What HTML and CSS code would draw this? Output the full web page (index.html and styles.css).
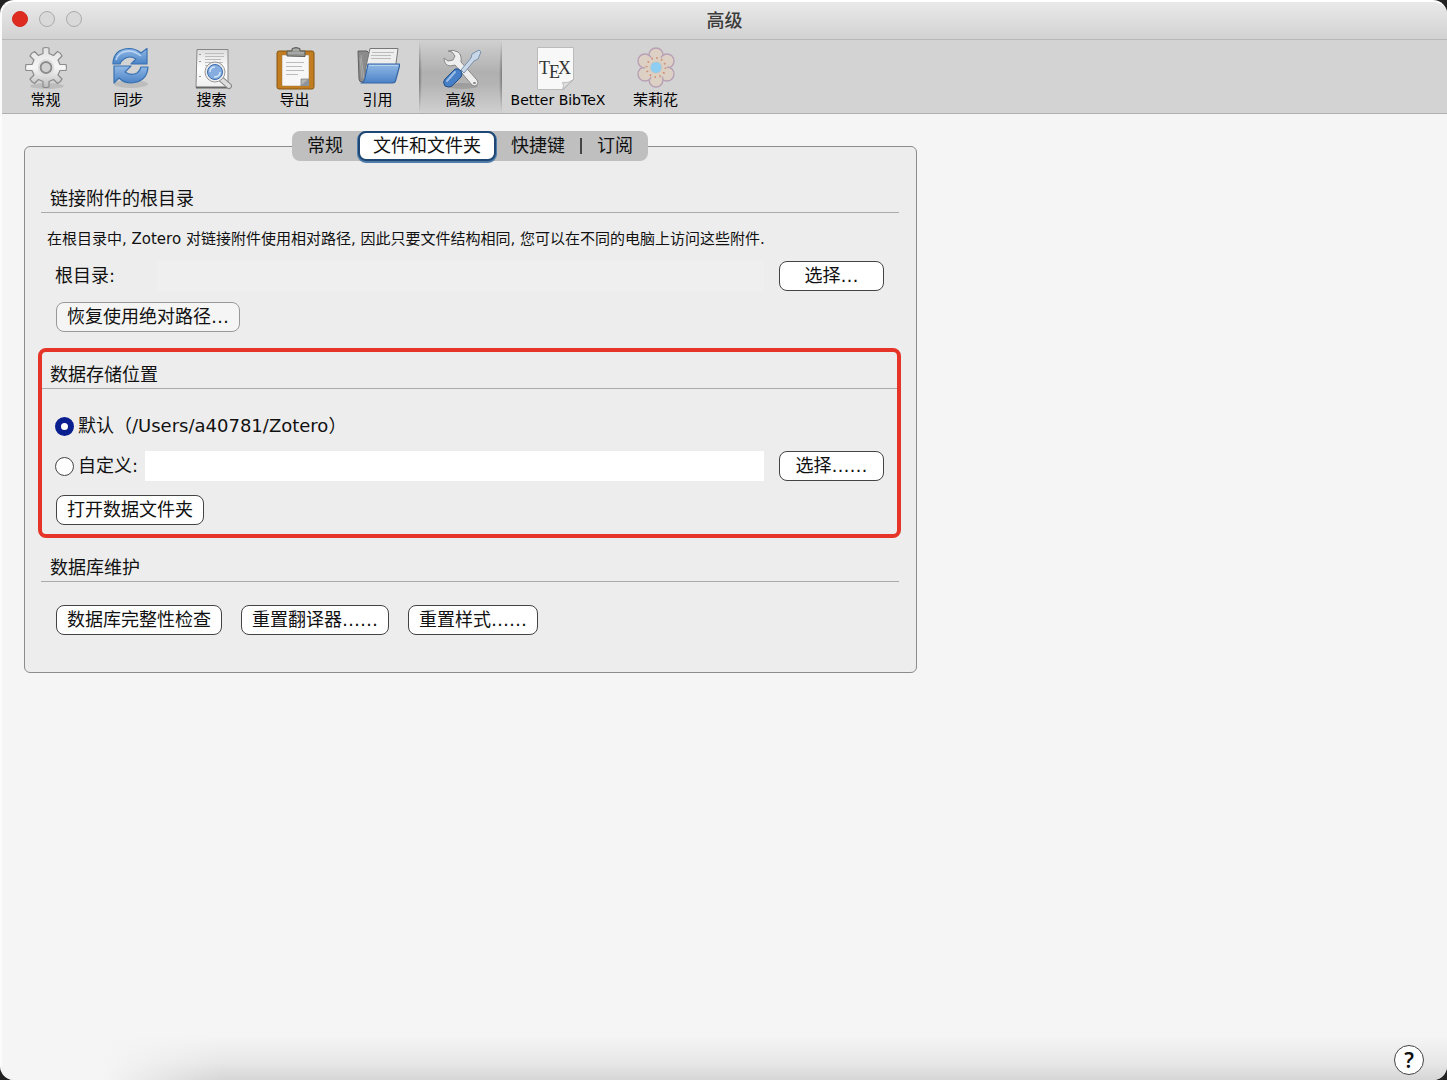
FILE: index.html
```html
<!DOCTYPE html>
<html lang="zh-CN">
<head>
<meta charset="utf-8">
<title>高级</title>
<link rel="stylesheet" href="styles.css">
</head>
<body>
<div class="window">
  <header class="titlebar">
    <div class="lights">
      <button class="light light-close" type="button" aria-label="关闭"></button>
      <button class="light" type="button" aria-label="最小化"></button>
      <button class="light" type="button" aria-label="缩放"></button>
    </div>
    <h1 class="title">高级</h1>
  </header>

  <nav class="toolbar">
    <button class="tool" type="button">
      <svg class="icon" viewBox="0 0 44 44">
        <defs>
          <linearGradient id="gear" x1="0" y1="0" x2="0" y2="1"><stop offset="0" stop-color="#e2e2e2"/><stop offset=".5" stop-color="#f6f6f6"/><stop offset="1" stop-color="#bcbcbc"/></linearGradient>
          <linearGradient id="blue" x1="0" y1="0" x2="0" y2="1"><stop offset="0" stop-color="#92b9e6"/><stop offset="1" stop-color="#4b83c6"/></linearGradient>
          <linearGradient id="paper" x1="0" y1="0" x2="0" y2="1"><stop offset="0" stop-color="#dedede"/><stop offset=".5" stop-color="#fff"/><stop offset="1" stop-color="#eee"/></linearGradient>
        </defs>
        <ellipse cx="23" cy="40" rx="17" ry="3" fill="#000" opacity=".1"/>
        <path d="M19 7.500V2q3-1 6 0v5.500l4.500 2 4-4q3 1 4.500 4.500l-4 4 2 4.500H42q1 3 0 6h-6l-2 4.500 4 4q-1 3-4.500 4.500l-4-4-4.500 2v5.500q-3 1-6 0V35.500l-4.500-2-4 4q-3-1-4.500-4.500l4-4-2-4.500H2q-1-3 0-6h6l2-4.500-4-4q1-3 4.500-4.500l4 4z" fill="url(#gear)" stroke="#8b8b8b" stroke-width="1.200" stroke-linejoin="round"/>
        <circle cx="22" cy="21.500" r="5.500" fill="#d0d0d0" stroke="#8b8b8b" stroke-width="2"/>
        <circle cx="22" cy="21.500" r="7.500" fill="none" stroke="#ddd" stroke-width="1.500"/>
      </svg>
      <span>常规</span>
    </button>
    <button class="tool" type="button">
      <svg class="icon" viewBox="0 0 44 44">
        <ellipse cx="24" cy="38" rx="17" ry="4" fill="#000" opacity=".1"/>
        <path d="M6 17Q7 3 22 2.500q7 0 12 4.500l6-4.500V18H24l5-5q-6-4-12 0-3 2-4 5H6z" fill="url(#blue)" stroke="#3972b3" stroke-width="1.200" stroke-linejoin="round"/>
        <path d="M41 21q-1 15-17 16-7 0-12-5l-5 5V20h17l-6 6q6 4 12 1 3-2 4-6z" fill="url(#blue)" stroke="#3972b3" stroke-width="1.200" stroke-linejoin="round"/>
        <path d="M9 14q2-8 12-9 7 0 13 5" fill="none" stroke="#bdd6f3" stroke-width="1.500"/>
      </svg>
      <span>同步</span>
    </button>
    <button class="tool" type="button">
      <svg class="icon" viewBox="0 0 44 44">
        <path d="M7 3.500h31v38H6z" fill="url(#paper)" stroke="#888"/>
        <path d="M6 41.500h32" stroke="#666" stroke-width="2"/>
        <path d="M15 7.500h19M15 10.500h19M15 13.500h16M15 16.500h18M15 19.500h6" stroke="#bbb" stroke-width="1"/>
        <path d="M10 8v1M10 15v1M10 30v1" stroke="#999" stroke-width="2"/>
        <path d="m31 33 8 7" stroke="#888" stroke-width="6" stroke-linecap="round"/><path d="m31 33 8 7" stroke="#ddd" stroke-width="4" stroke-linecap="round"/>
        <circle cx="25" cy="26" r="10" fill="#eee" stroke="#999"/><circle cx="25" cy="26" r="7.500" fill="#86ade0" stroke="#386bad"/>
        <path d="M20 26q0-5 5-5M24 31q6 0 6-5" fill="none" stroke="#cfe3fa" stroke-width="1.500"/>
      </svg>
      <span>搜索</span>
    </button>
    <button class="tool" type="button">
      <svg class="icon" viewBox="0 0 44 44">
        <rect x="4" y="5" width="37" height="38" rx="2" fill="#c17d20" stroke="#865713"/>
        <path d="M9 9h27v24l-6 7H9z" fill="#f7f7f7" stroke="#a17a45" stroke-width=".5"/><path d="M28 40v-7h8z" fill="#b5b5b5" stroke="#777" stroke-width=".7"/><path d="M28 40h8v-7z" fill="#8e949e"/>
        <path d="M13 16.500h18M13 20.500h16M13 24.500h18M13 28.500h12" stroke="#bbb"/>
        <path d="M14 10V5h5V2.500q4-2 8 0V5h5v5.500z" fill="#949692" stroke="#5c5e5a" stroke-linejoin="round"/><path d="M15 7h16M20 4h6" stroke="#bbb"/>
      </svg>
      <span>导出</span>
    </button>
    <button class="tool" type="button">
      <svg class="icon" viewBox="0 0 44 44">
        <path d="M2 5h9l3 3v28H6q-3 0-3-3z" fill="#8b8b8b" stroke="#606060"/>
        <path d="M5 9l3 24M4 12l2 20" stroke="#aaa"/>
        <path d="M14 2.500h28L39 25H9z" fill="#eee" stroke="#777"/><path d="M16 6.500h22M15 9.500h20M15 12.500h20" stroke="#bbb"/>
        <path d="M12 18h31q1 0 .5 2l-4 15q-.5 2-3 2H5q3 0 4-5z" fill="url(#blue)" stroke="#3465a4" stroke-width="1.200" stroke-linejoin="round"/><path d="M13 19.500h29" stroke="#b7d1ef"/>
      </svg>
      <span>引用</span>
    </button>
    <button class="tool tool-selected" type="button" aria-current="page">
      <svg class="icon" viewBox="0 0 44 44">
        <ellipse cx="23" cy="40" rx="16" ry="3" fill="#000" opacity=".13"/>
        <path d="M9 5l4 1 3 4-2 4-5 1-4-3q0 7 6 8l5-1 17 20q3 2 5 0t0-5L22 16q1-7-3-10-5-3-10-1z" fill="#eee" stroke="#888" stroke-linejoin="round"/>
        <path d="M35 37l1 0" stroke="#888" stroke-width="2" stroke-linecap="round"/>
        <path d="m22 24 10-12 1-4 7-4 2 2-3 7-4 2-10 12z" fill="#c8d8e8" stroke="#7a91ab" stroke-linejoin="round"/>
        <path d="M16 23q4-1 6 2t0 6l-9 9q-3 2-7 0-3-4 0-7z" fill="#467fc5" stroke="#244f87"/><path d="m16 26-8 9" stroke="#9bbde6" stroke-width="2" stroke-linecap="round"/>
      </svg>
      <span>高级</span>
    </button>
    <button class="tool tool-wide" type="button">
      <svg class="icon" viewBox="0 0 44 44">
        <path d="M1.500 1.500h36v32l-10 10h-26z" fill="#f8f8f8" stroke="#bbb"/><path d="M26.500 43.500q2-4 0-7 6 1 11-3z" fill="#ddd" stroke="#aaa" stroke-width=".7"/>
        <text class="tex" x="3" y="28">T</text><text class="tex" x="13" y="32">E</text><text class="tex" x="22" y="28">X</text>
      </svg>
      <span>Better BibTeX</span>
    </button>
    <button class="tool" type="button">
      <svg class="icon" viewBox="0 0 44 44">
        <g fill="#ddd0c4" stroke="#b7a0b5" stroke-width="1.400">
          <circle cx="22" cy="9" r="7"/><circle cx="33" cy="15" r="7"/><circle cx="33" cy="28" r="7"/><circle cx="22" cy="34" r="7"/><circle cx="11" cy="28" r="7"/><circle cx="11" cy="15" r="7"/>
        </g>
        <circle cx="22" cy="21.500" r="11" fill="#ddd0c4"/>
        <circle cx="22" cy="21.500" r="9.500" fill="none" stroke="#cf9078" stroke-width="2" stroke-dasharray="1.500 3.474"/>
        <circle cx="22" cy="21.500" r="6" fill="#8fcdf2" stroke="#e0c8b0"/>
      </svg>
      <span>茉莉花</span>
    </button>
  </nav>

  <main class="content">
    <section class="group">
      <div class="tabs" role="tablist">
        <button class="tab" type="button" role="tab">常规</button>
        <button class="tab tab-selected" type="button" role="tab" aria-selected="true">文件和文件夹</button>
        <button class="tab" type="button" role="tab">快捷键</button>
        <span class="tab-divider"></span>
        <button class="tab" type="button" role="tab">订阅</button>
      </div>

      <section class="block block-base">
        <h2 class="caption">链接附件的根目录</h2>
        <p class="note">在根目录中, Zotero 对链接附件使用相对路径, 因此只要文件结构相同, 您可以在不同的电脑上访问这些附件.</p>
        <div class="row row-base">
          <label class="base-label" for="base-dir">根目录:</label>
          <input class="field field-disabled" id="base-dir" type="text" disabled>
          <button class="btn btn-choose" type="button">选择…</button>
        </div>
        <div class="row row-restore"><button class="btn btn-muted" type="button">恢复使用绝对路径…</button></div>
      </section>

      <section class="block block-data">
        <h2 class="caption">数据存储位置</h2>
        <div class="row row-default">
          <input class="radio" type="radio" name="location" id="loc-default" checked>
          <label for="loc-default">默认（/Users/a40781/Zotero）</label>
        </div>
        <div class="row row-custom">
          <input class="radio" type="radio" name="location" id="loc-custom">
          <label class="custom-label" for="loc-custom">自定义:</label>
          <input class="field" type="text" aria-label="自定义路径">
          <button class="btn btn-choose" type="button">选择……</button>
        </div>
        <div class="row row-open"><button class="btn" type="button">打开数据文件夹</button></div>
      </section>

      <section class="block block-maintenance">
        <h2 class="caption">数据库维护</h2>
        <div class="row row-actions">
          <button class="btn" type="button">数据库完整性检查</button>
          <button class="btn" type="button">重置翻译器……</button>
          <button class="btn" type="button">重置样式……</button>
        </div>
      </section>
    </section>
  </main>

  <footer class="footer">
    <button class="help" type="button" aria-label="帮助">?</button>
  </footer>
</div>
</body>
</html>
```
FILE: styles.css
```css
* {
  box-sizing: border-box;
}

body {
  margin: 0;
  background: #222;
  color: #111;
  font: 18px/26px "DejaVu Sans", "Noto Sans CJK SC", sans-serif;
}

button,
input {
  margin: 0;
  padding: 0;
  color: inherit;
  font: inherit;
}

h1,
h2,
p {
  margin: 0;
  font-size: inherit;
  font-weight: 400;
}

.window {
  display: flex;
  flex-direction: column;
  min-height: 100vh;
  overflow: hidden;
  background: #f5f5f5;
  border-top: 2px solid #fff;
  border-left: 2px solid #fbfbfb;
  border-radius: 14px;
}

.titlebar {
  display: grid;
  grid-template-columns: 1fr auto 1fr;
  align-items: center;
  height: 38px;
  padding: 0 10px 4px;
  background: linear-gradient(#e9e9e9, #d2d2d2);
  border-bottom: 1px solid #b8b8b8;
}

.lights {
  display: flex;
  gap: 11px;
}

.light {
  width: 16px;
  height: 16px;
  background: #d9d9d9;
  border: 1px solid #aaa;
  border-radius: 50%;
}

.light-close {
  background: #df2c20;
  border-color: #d2281d;
}

.title {
  color: #3c3c3c;
  font-family: "Noto Sans CJK SC", sans-serif;
  font-weight: 500;
}

.toolbar {
  display: flex;
  height: 74px;
  padding-left: 2px;
  background: #d3d3d3;
  border-bottom: 1px solid #b0b0b0;
}

.tool {
  display: flex;
  flex-direction: column;
  align-items: center;
  width: 83px;
  padding-top: 6px;
  background: none;
  border: 0;
  color: #000;
  font-size: 15px;
  line-height: 20px;
}

.tool-wide {
  width: 112px;
  font-size: 14px;
}

.tool-selected {
  background:
    radial-gradient(ellipse 3px 36px at left, #777, transparent),
    radial-gradient(ellipse 3px 36px at right, #777, transparent),
    linear-gradient(#d0d0d0, #b0b0b0 45%, #b4b4b4 60%, #d0d0d0);
}

.icon {
  width: 44px;
  height: 44px;
}

.tex {
  fill: #333;
  font: 18px "Liberation Serif", serif;
}

.content {
  padding: 32px 22px;
}

.group {
  max-width: 893px;
  padding: 0 17px 37px 16px;
  background: #ededed;
  border: 1px solid #8c8c8c;
  border-radius: 6px;
}

.tabs {
  display: flex;
  align-items: center;
  width: fit-content;
  height: 30px;
  margin: -16px auto 0;
  background: #bfbfbf;
  border-radius: 8px;
}

.tab {
  height: 30px;
  padding: 0 15px;
  background: none;
  border: 0;
}

.tab-selected {
  padding: 0 13px;
  background: #fff;
  border: 2px solid #1f4774;
  border-radius: 8px;
  box-shadow: 0 1px 0 1px #4f7cab;
  line-height: 24px;
}

.tab-divider {
  width: 2px;
  height: 16px;
  background: #444;
}

.caption {
  height: 26px;
  padding-left: 9px;
  border-bottom: 1px solid #aaa;
  line-height: 24px;
}

.row {
  display: flex;
  align-items: center;
  min-height: 30px;
  padding: 0 15px 0 14px;
}

.block-base {
  margin-top: 26px;
}

.note {
  margin-top: 16px;
  padding-left: 6px;
  font-size: 15px;
  line-height: 20px;
}

.row-base {
  margin-top: 12px;
}

.base-label {
  width: 102px;
}

.row-restore {
  margin-top: 11px;
  padding-left: 15px;
}

.field {
  flex: 1;
  min-width: 0;
  height: 30px;
  margin-right: 15px;
  background: #fff;
  border: 0;
}

.field-disabled {
  background: #efefef;
}

.btn {
  height: 30px;
  padding: 0 10px;
  background: #fff;
  border: 1px solid #444;
  border-radius: 8px;
  white-space: nowrap;
}

.btn-choose {
  width: 105px;
}

.btn-muted {
  background: #f5f5f5;
  border-color: #999;
}

.block-data {
  margin: 16px -2px 0 -3px;
  padding: 11px 0 9px;
  border: 4px solid #e63528;
  border-radius: 8px;
}

.block-data .caption {
  padding-left: 8px;
}

.row-default,
.row-custom {
  padding: 0 13px;
}

.row-default {
  margin-top: 22px;
}

.row-custom {
  margin-top: 10px;
}

.row-open {
  margin-top: 14px;
}

.radio {
  flex: none;
  width: 19px;
  height: 19px;
  margin-right: 4px;
  appearance: none;
  background: #fff;
  border: 1px solid #444;
  border-radius: 50%;
}

.radio:checked {
  border: 6px solid #0a1f8f;
}

.custom-label {
  width: 67px;
}

.block-maintenance {
  margin-top: 18px;
}

.row-actions {
  gap: 19px;
  margin-top: 23px;
  padding-left: 15px;
}

.footer {
  display: flex;
  justify-content: flex-end;
  margin-top: auto;
  padding: 10px 23px 5px;
  background:
    linear-gradient(90deg, #f5f5f5 100px, transparent 220px),
    linear-gradient(#f5f5f5, #e8e8e8 60%, #d6d6d6);
}

.help {
  width: 30px;
  height: 30px;
  background: #fff;
  border: 1px solid #444;
  border-radius: 50%;
  font-family: "Noto Sans", sans-serif;
  font-size: 21px;
  font-weight: 600;
  line-height: 28px;
}
```
